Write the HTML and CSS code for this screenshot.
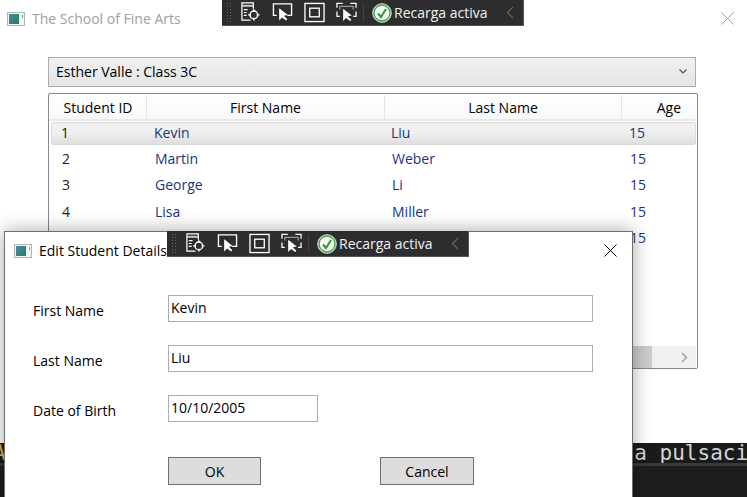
FILE: index.html
```html
<!DOCTYPE html>
<html lang="en">
<head>
    <meta charset="UTF-8">
    <meta name="viewport" content="width=device-width, initial-scale=1.0">
    <title>The School of Fine Arts</title>
    <link rel="stylesheet" href="styles.css">
</head>
<body>

<svg class="defs" width="0" height="0">
    <symbol id="app-icon" viewBox="0 0 18 14">
        <defs>
            <linearGradient id="app-fill" x1="0" y1="0" x2="1" y2="1">
                <stop offset="0" stop-color="#3f8fa8"/>
                <stop offset="1" stop-color="#2f7a5a"/>
            </linearGradient>
        </defs>
        <rect x="0.5" y="0.5" width="17" height="13" fill="#f4f4f4" stroke="#b4b4b4"/>
        <rect x="2" y="2" width="10" height="10" fill="url(#app-fill)"/>
        <rect x="15" y="3" width="1" height="3" fill="#8a9a8a"/>
    </symbol>
    <symbol id="tb-live" viewBox="0 0 22 22">
        <path d="M11 19H2V1h12v6" fill="none" stroke="#fff" stroke-width="1.3"/>
        <path d="M2 4h12" stroke="#ccc" stroke-width="2"/>
        <path d="M4 8h4M4 11h3M4 14h3" stroke="#fff" stroke-width="1.3"/>
        <circle cx="14.5" cy="13.5" r="4" fill="none" stroke="#fff" stroke-width="1.5"/>
        <path d="M14.5 7.5v3M14.5 16.5v3M8.5 13.5h3M17.5 13.5h3" stroke="#fff" stroke-width="1.5"/>
    </symbol>
    <symbol id="tb-select" viewBox="0 0 22 22">
        <path d="M5 14H1.500V2h19v12H16" fill="none" stroke="#fff" stroke-width="1.4"/>
        <path d="M7.500 6.500v13l3-3.200 4.500 3 1-1.300-3.500-3.500 4-.8z" fill="#fff"/>
    </symbol>
    <symbol id="tb-box" viewBox="0 0 22 22">
        <rect x="1" y="1.500" width="20" height="19" fill="none" stroke="#fff" stroke-width="1.400"/>
        <rect x="6" y="6.500" width="10" height="9" fill="none" stroke="#fff" stroke-width="1.400"/>
    </symbol>
    <symbol id="tb-track" viewBox="0 0 22 22">
        <path d="M1 6V1.500h6M15 1.500h6V6M1 10v5h3M21 10v5h-3" fill="none" stroke="#fff" stroke-width="1.300"/>
        <path d="M4 8V4.500h14V8" fill="none" stroke="#bbb" stroke-width="1"/>
        <path d="M7.500 7v13l3-3.200 4.500 3 1-1.300-3.500-3.500 4-.8z" fill="#fff"/>
    </symbol>
    <symbol id="tb-check" viewBox="0 0 20 20">
        <circle cx="10" cy="10" r="9.300" fill="#f6faf4" stroke="#c8d4c8" stroke-width="1"/>
        <circle cx="10" cy="10" r="8" fill="none" stroke="#3aa03a" stroke-width="1.300"/>
        <path d="M6 10.500l3 3.500 5-8" fill="none" stroke="#2c9a2c" stroke-width="2"/>
    </symbol>
</svg>

<div class="terminal">
    <span class="term-left">A</span>
    <span class="term-right">la pulsaci</span>
</div>

<div class="main-window">
    <div class="titlebar">
        <svg class="app-icon"><use href="#app-icon"/></svg>
        <span class="title-text">The School of Fine Arts</span>
    </div>
    <svg class="close-main" viewBox="0 0 14 14"><path d="M.5.500l13 13M13.500.500l-13 13" stroke="#9a9a9a" fill="none"/></svg>

    <div class="combo">
        <span>Esther Valle : Class 3C</span>
        <svg class="combo-arrow" viewBox="0 0 8 5"><path d="M.5.500L4 4 7.500.500" fill="none" stroke="#555" stroke-width="1.200"/></svg>
    </div>

    <div class="grid">
        <div class="grid-head">
            <div class="head-cell">Student ID</div>
            <div class="head-cell">First Name</div>
            <div class="head-cell">Last Name</div>
            <div class="head-cell last">Age</div>
        </div>
        <div class="row selected"><span class="id">1</span><span>Kevin</span><span>Liu</span><span>15</span></div>
        <div class="row"><span class="id">2</span><span>Martin</span><span>Weber</span><span>15</span></div>
        <div class="row"><span class="id">3</span><span>George</span><span>Li</span><span>15</span></div>
        <div class="row"><span class="id">4</span><span>Lisa</span><span>Miller</span><span>15</span></div>
        <div class="row"><span class="id">5</span><span>Anna</span><span>Frank</span><span>15</span></div>
        <div class="scrollbar">
            <div class="thumb"></div>
            <svg class="scroll-arrow" viewBox="0 0 7 11"><path d="M1 1l4.500 4.500L1 10" fill="none" stroke="#a0a0a0" stroke-width="1.500"/></svg>
        </div>
    </div>
</div>

<div class="toolbar toolbar-main">
    <div class="grip"></div>
    <svg class="tb-icon first"><use href="#tb-live"/></svg>
    <svg class="tb-icon"><use href="#tb-select"/></svg>
    <svg class="tb-icon"><use href="#tb-box"/></svg>
    <svg class="tb-icon"><use href="#tb-track"/></svg>
    <div class="tb-sep"></div>
    <svg class="tb-check"><use href="#tb-check"/></svg>
    <span class="tb-text">Recarga activa</span>
    <svg class="tb-chevron" viewBox="0 0 8 13"><path d="M7 1L1.500 6.500 7 12" fill="none" stroke="#666" stroke-width="1.200"/></svg>
</div>

<div class="dialog">
    <div class="dialog-title">
        <svg class="app-icon"><use href="#app-icon"/></svg>
        <span>Edit Student Details</span>
        <svg class="close-dialog" viewBox="0 0 13 13"><path d="M.5.500l12 12M12.500.500l-12 12" stroke="#000" fill="none"/></svg>
    </div>
    <div class="form">
        <label>First Name</label>
        <div class="field">Kevin</div>
        <label>Last Name</label>
        <div class="field">Liu</div>
        <label>Date of Birth</label>
        <div class="field date">10/10/2005</div>
    </div>
    <div class="buttons">
        <button class="ok">OK</button>
        <button>Cancel</button>
    </div>
</div>

<div class="toolbar toolbar-dialog">
    <div class="grip"></div>
    <svg class="tb-icon first"><use href="#tb-live"/></svg>
    <svg class="tb-icon"><use href="#tb-select"/></svg>
    <svg class="tb-icon"><use href="#tb-box"/></svg>
    <svg class="tb-icon"><use href="#tb-track"/></svg>
    <div class="tb-sep"></div>
    <svg class="tb-check"><use href="#tb-check"/></svg>
    <span class="tb-text">Recarga activa</span>
    <svg class="tb-chevron" viewBox="0 0 8 13"><path d="M7 1L1.500 6.500 7 12" fill="none" stroke="#666" stroke-width="1.200"/></svg>
</div>

</body>
</html>
```

FILE: styles.css
```css
html, body {
    margin: 0;
    height: 100%;
}
body {
    font-family: "Open Sans", Arial, sans-serif;
    font-size: 14px;
    color: #000;
    background-color: #1e1e1e;
    overflow: hidden;
    position: relative;
}
.defs {
    position: absolute;
}

/* terminal behind the windows */
.terminal {
    position: absolute;
    left: 0;
    top: 443px;
    width: 747px;
    height: 20px;
    border-bottom: 3px solid #3a3a3a;
    background-color: #1a1a1a;
    font-family: "DejaVu Sans Mono", monospace;
    font-size: 21px;
    line-height: 20px;
    color: #d4d4d4;
    white-space: nowrap;
    overflow: hidden;
    display: flex;
}
.term-left {
    margin-left: -7px;
    color: #e0b060;
}
.term-right {
    margin-left: 616px;
}

/* main window */
.main-window {
    position: absolute;
    left: 0;
    top: 0;
    width: 747px;
    height: 443px;
    background: white;
    padding: 0 0 0 48px;
    box-sizing: border-box;
}
.titlebar {
    display: flex;
    align-items: center;
    height: 37px;
    margin-left: -41px;
    color: #a0a0a0;
    font-size: 14px;
}
.app-icon {
    width: 18px;
    height: 14px;
    margin-right: 7px;
    flex: none;
}
.close-main {
    position: absolute;
    left: 721px;
    top: 12px;
    width: 13px;
    height: 13px;
}
.combo {
    display: flex;
    align-items: center;
    justify-content: space-between;
    width: 648px;
    height: 30px;
    margin-top: 20px;
    padding: 0 8px 2px 7px;
    box-sizing: border-box;
    border: 1px solid #acacac;
    background: linear-gradient(#f0f0f0, #e5e5e5);
}
.combo-arrow {
    width: 8px;
    height: 5px;
}
.grid {
    position: relative;
    width: 650px;
    height: 276px;
    margin-top: 6px;
    box-sizing: border-box;
    border: 1px solid #828790;
    border-radius: 2px;
    padding: 1px 1px 0 1px;
    overflow: hidden;
}
.grid-head {
    display: grid;
    grid-template-columns: 97px 238px 237px 1fr;
    height: 24px;
    border-bottom: 2px solid #e8e8e8;
    background: linear-gradient(#fff, #f8f8f8);
}
.head-cell {
    display: flex;
    align-items: center;
    justify-content: center;
    border-right: 1px solid #e4e4e4;
}
.head-cell.last {
    border-right: none;
    justify-content: flex-end;
    padding-right: 15px;
}
.row {
    display: grid;
    grid-template-columns: 94px 237px 238px 1fr;
    align-items: center;
    height: 26.5px;
    padding-left: 3px;
    color: #17367e;
}
.row span {
    padding-left: 8px;
}
.row span.id {
    padding-left: 9px;
    color: #222;
}
.row.selected {
    height: 23px;
    margin: 1px 0 0 1px;
    padding-left: 0;
    padding-bottom: 2px;
    border: 1px solid #dadada;
    border-radius: 2px;
    box-sizing: border-box;
    background: linear-gradient(#f0f0f0 0%, #f0f0f0 45%, #dedede 100%);
}
.scrollbar {
    position: absolute;
    left: 1px;
    right: 1px;
    bottom: 0;
    height: 22px;
    background-color: #f0f0f0;
}
.thumb {
    width: 602px;
    height: 100%;
    background-color: #cdcdcd;
}
.scroll-arrow {
    position: absolute;
    right: 8px;
    top: 6px;
    width: 7px;
    height: 11px;
}

/* toolbars of the debugger */
.toolbar {
    position: absolute;
    display: flex;
    align-items: center;
    width: 302px;
    height: 26px;
    box-sizing: border-box;
    padding-left: 4px;
    background-color: #2d2d30;
    color: #f2f2f2;
    font-size: 14px;
    border-bottom: 1px solid #555;
    border-right: 1px solid #555;
}
.toolbar-main {
    left: 222px;
    top: 0;
}
.toolbar-dialog {
    left: 167px;
    top: 231px;
}
.grip {
    width: 6px;
    height: 21px;
    background-image: radial-gradient(#666 1px, transparent 1px);
    background-size: 3px 3px;
}
.tb-icon {
    width: 21px;
    height: 21px;
    margin-left: 11px;
    flex: none;
}
.tb-icon.first {
    margin-left: 8px;
}
.tb-sep {
    width: 1px;
    height: 17px;
    margin-left: 6px;
    background-color: #444;
}
.tb-check {
    width: 20px;
    height: 20px;
    margin-left: 8px;
    flex: none;
}
.tb-text {
    margin-left: 2px;
    white-space: nowrap;
}
.tb-chevron {
    width: 8px;
    height: 13px;
    margin-left: 18px;
    flex: none;
}

/* dialog */
.dialog {
    position: absolute;
    left: 4px;
    top: 231px;
    width: 629px;
    height: 290px;
    box-sizing: border-box;
    background: white;
    border: 1px solid #6f6f6f;
    box-shadow: 0 0 18px rgba(0, 0, 0, 0.35);
}
.dialog-title {
    display: flex;
    align-items: center;
    height: 37px;
    padding-left: 9px;
}
.close-dialog {
    position: absolute;
    left: 599px;
    top: 12px;
    width: 13px;
    height: 13px;
}
.form {
    display: grid;
    grid-template-columns: 135px 425px;
    row-gap: 23px;
    align-items: center;
    margin-top: 26px;
    padding-left: 28px;
}
.form label {
    margin-top: 3px;
}
.field {
    height: 27px;
    box-sizing: border-box;
    border: 1px solid #abadb3;
    padding: 2px 2px;
    line-height: 19px;
}
.field.date {
    width: 150px;
}
.buttons {
    display: flex;
    gap: 119px;
    margin-top: 35px;
    padding-left: 163px;
}
button {
    width: 94px;
    height: 28px;
    border: 1px solid #707070;
    background-color: #dddddd;
    font-family: inherit;
    font-size: 14px;
    color: #000;
    padding: 0;
}
button.ok {
    width: 93px;
}
```
